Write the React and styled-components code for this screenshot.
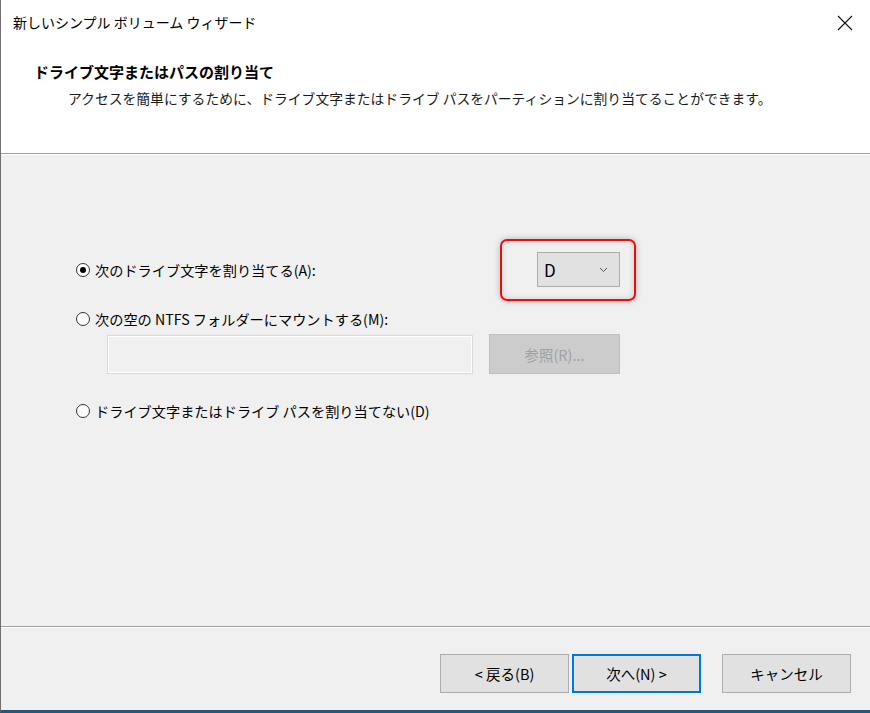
import styled, { createGlobalStyle } from "styled-components";

const GlobalStyle = createGlobalStyle`
  html, body {
    margin: 0;
    padding: 0;
    background: #f0f0f0;
  }
  body {
    font-family: "Noto Sans CJK JP", "Noto Sans", sans-serif;
    color: #000;
  }
`;

const Window = styled.div`
  width: 870px;
  height: 713px;
  display: flex;
  flex-direction: column;
  box-sizing: border-box;
  border-left: 1px solid #6f6f6f;
  border-bottom: 3px solid #1d5a80;
  background: #f0f0f0;
  overflow: hidden;
`;

const Top = styled.div`
  background: #ffffff;
  height: 153px;
  border-bottom: 1px solid #a0a0a0;
  box-shadow: 0 1px 0 #ffffff;
  display: flex;
  flex-direction: column;
`;

const TitleBar = styled.div`
  height: 45px;
  display: flex;
  align-items: center;
  justify-content: space-between;
  padding: 0 16px 0 12px;
`;

const Title = styled.div`
  font-size: 14px;
  line-height: 20px;
  margin-top: -1px;
`;

const CloseButton = styled.div`
  width: 18px;
  height: 18px;
  display: flex;
  align-items: center;
  justify-content: center;
`;

const Header = styled.div`
  padding: 16px 0 0 33px;
`;

const HeaderTitle = styled.div`
  font-size: 15px;
  font-weight: 700;
  line-height: 22px;
`;

const HeaderText = styled.div`
  font-size: 13.8px;
  line-height: 20px;
  margin: 5px 0 0 34px;
  color: #1a1a1a;
`;

const Body = styled.div`
  flex: 1;
  padding: 98px 0 0 75px;
`;

const Options = styled.div`
  width: 544px;
  display: flex;
  flex-direction: column;
`;

const Row = styled.div`
  display: flex;
  align-items: center;
  justify-content: space-between;
  height: ${(p) => p.height || 22}px;
  margin-top: ${(p) => p.gap || 0}px;
`;

const RadioLabel = styled.label`
  display: flex;
  align-items: center;
  gap: 5px;
  font-size: 14.2px;
  line-height: 22px;
  color: #000;
`;

const RadioCircle = styled.span`
  width: 12px;
  height: 12px;
  border: 1px solid #333;
  border-radius: 50%;
  background: #fff;
  display: flex;
  align-items: center;
  justify-content: center;
  flex: none;

  &::after {
    content: "";
    width: 6px;
    height: 6px;
    border-radius: 50%;
    background: ${(p) => (p.checked ? "#000" : "transparent")};
  }
`;

const Highlight = styled.div`
  position: relative;

  &::before {
    content: "";
    position: absolute;
    top: -13px;
    bottom: -14px;
    left: -37px;
    right: -16px;
    border: 2px solid #f00c0c;
    border-radius: 7px;
    box-shadow: 0 0 6px rgba(0, 0, 0, 0.25), inset 0 0 6px rgba(0, 0, 0, 0.15);
    pointer-events: none;
  }
`;

const Select = styled.div`
  width: 83px;
  height: 35px;
  box-sizing: border-box;
  border: 1px solid #adadad;
  background: #e1e1e1;
  display: flex;
  align-items: center;
  justify-content: space-between;
  padding: 0 11px 0 6px;
  font-size: 17px;
`;

const FolderRow = styled.div`
  display: flex;
  align-items: center;
  margin: 4px 0 0 31px;
  gap: 16px;
`;

const PathInput = styled.div`
  width: 366px;
  height: 39px;
  box-sizing: border-box;
  border: 1px solid #d9d9d9;
  background: #f0f0f0;
  box-shadow: inset 0 0 0 1px #ffffff;
`;

const BrowseButton = styled.div`
  width: 131px;
  height: 40px;
  box-sizing: border-box;
  background: #cccccc;
  border: 1px solid #bfbfbf;
  color: #a0a0a0;
  font-size: 14.5px;
  display: flex;
  align-items: center;
  justify-content: center;
`;

const Footer = styled.div`
  height: 84px;
  border-top: 1px solid #a0a0a0;
  box-shadow: inset 0 1px 0 #ffffff;
  display: flex;
  justify-content: flex-end;
  align-items: flex-start;
  padding: 27px 19px 0 0;
  box-sizing: border-box;
`;

const Button = styled.div`
  width: 129px;
  height: 39px;
  box-sizing: border-box;
  background: #e1e1e1;
  border: 1px solid ${(p) => (p.primary ? "#0078d7" : "#adadad")};
  box-shadow: ${(p) => (p.primary ? "inset 0 0 0 1px #0078d7" : "none")};
  font-size: 14.5px;
  display: flex;
  align-items: center;
  justify-content: center;
  margin-left: ${(p) => p.gap || 0}px;
`;

const Radio = ({ checked, children }) => (
  <RadioLabel>
    <RadioCircle checked={checked} />
    {children}
  </RadioLabel>
);

const App = () => {
  return (
    <>
      <GlobalStyle />
      <Window>
        <Top>
          <TitleBar>
            <Title>新しいシンプル ボリューム ウィザード</Title>
            <CloseButton>
              <svg width="16" height="16" viewBox="0 0 16 16">
                <path d="M1 1 L15 15 M15 1 L1 15" stroke="#111" strokeWidth="1.1" fill="none" />
              </svg>
            </CloseButton>
          </TitleBar>
          <Header>
            <HeaderTitle>ドライブ文字またはパスの割り当て</HeaderTitle>
            <HeaderText>
              アクセスを簡単にするために、ドライブ文字またはドライブ パスをパーティションに割り当てることができます。
            </HeaderText>
          </Header>
        </Top>

        <Body>
          <Options>
            <Row height={35}>
              <Radio checked>次のドライブ文字を割り当てる(A):</Radio>
              <Highlight>
                <Select>
                  <span>D</span>
                  <svg width="9" height="6" viewBox="0 0 9 6">
                    <path d="M1 1 L4.5 4.5 L8 1" stroke="#555" strokeWidth="1" fill="none" />
                  </svg>
                </Select>
              </Highlight>
            </Row>
            <Row gap={21}>
              <Radio>次の空の NTFS フォルダーにマウントする(M):</Radio>
            </Row>
            <FolderRow>
              <PathInput />
              <BrowseButton>参照(R)...</BrowseButton>
            </FolderRow>
            <Row gap={26}>
              <Radio>ドライブ文字またはドライブ パスを割り当てない(D)</Radio>
            </Row>
          </Options>
        </Body>

        <Footer>
          <Button>&lt; 戻る(B)</Button>
          <Button primary gap={3}>次へ(N) &gt;</Button>
          <Button gap={21}>キャンセル</Button>
        </Footer>
      </Window>
    </>
  );
};

export default App;
